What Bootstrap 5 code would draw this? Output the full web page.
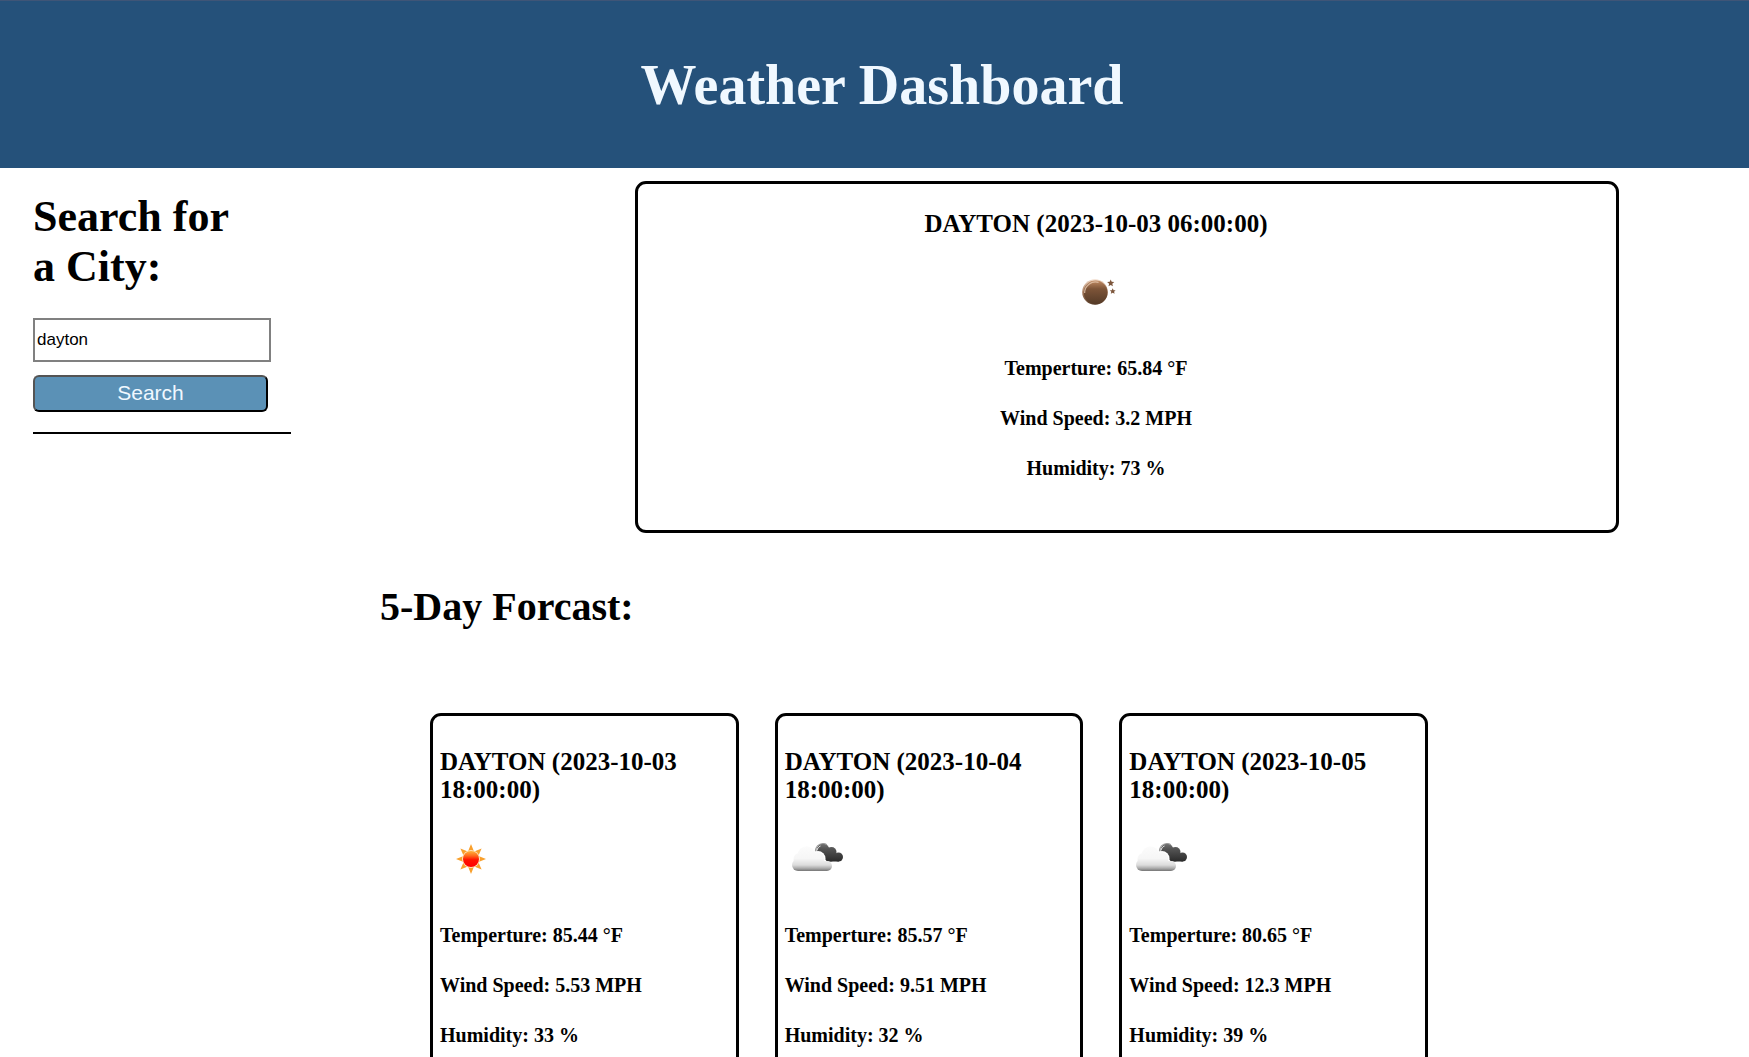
<!DOCTYPE html>
<html lang="en">
<head>
<meta charset="utf-8">
<meta name="viewport" content="width=device-width, initial-scale=1">
<title>Weather Dashboard</title>
<link href="https://cdn.jsdelivr.net/npm/bootstrap@5.3.0/dist/css/bootstrap.min.css" rel="stylesheet">
<style>
  body { font-family: "Liberation Serif", "Times New Roman", serif; color: #000; background: #fff; }
  h1, h2, h3, h4 { font-weight: 700; margin: 0; }
  .site-header { background: #25517a; border-top: 1px solid #3f5577; color: aliceblue; padding: 52px 0 51px 15px; }
  .site-header h1 { font-size: 56px; line-height: 64px; }
  .search-panel { width: 380px; padding: 24px 89px 0 33px; }
  .search-title { font-size: 44px; line-height: 50px; margin-bottom: 26px; }
  .city-input { width: 238px; height: 44px; border: 2px solid #808080; border-radius: 0; padding: 0 2px; font: 17px "Liberation Sans", Arial, sans-serif; color: #000; }
  .search-btn { width: 235px; height: 37px; margin-top: 13px; padding: 0 0 2px; border: 2px outset #000; border-radius: 6px; background: #5b91b6; color: aliceblue; font: 21px "Liberation Sans", Arial, sans-serif; }
  .divider { height: 2px; margin: 20px 0 0; background: #000; border: 0; opacity: 1; }
  .weather-card { border: 3px solid #000; border-radius: 11px; }
  .weather-card h3 { font-size: 25px; line-height: 28px; }
  .weather-card h4 { font-size: 20px; line-height: 23px; }
  .weather-card svg { display: block; width: 62px; height: 62px; margin: 24px 0 34px; }
  .readings { display: flex; flex-direction: column; gap: 27px; }
  .current { margin: 13px 130px 0 255px; padding: 26px 62px 50px 0; }
  .current svg { margin-top: 23px; }
  .forecast-title { font-size: 40px; line-height: 46px; margin: 51px 0 83px; }
  .forecast { gap: 36px; margin: 0 321px 0 50px; }
  .forecast .weather-card { flex: 1 1 0; padding: 32px 7px 52px; }
</style>
<script src="https://cdn.jsdelivr.net/npm/bootstrap@5.3.0/dist/js/bootstrap.bundle.min.js" defer></script>
</head>
<body>
<svg width="0" height="0" class="position-absolute" aria-hidden="true">
  <defs>
    <linearGradient id="sunFill" x1="0" y1="0" x2="0" y2="1"><stop offset="0" stop-color="#ffb43c"/><stop offset=".3" stop-color="#ff6a1c"/><stop offset=".55" stop-color="#ff1200"/><stop offset="1" stop-color="#ff0000"/></linearGradient>
    <linearGradient id="moonFill" x1="0" y1="0" x2="0" y2="1"><stop offset="0" stop-color="#c08a62"/><stop offset=".35" stop-color="#7d5438"/><stop offset="1" stop-color="#543a27"/></linearGradient>
    <linearGradient id="moonRim" x1="0" y1="0" x2="0" y2="1"><stop offset="0" stop-color="#f3dccb"/><stop offset=".5" stop-color="#a5795a"/><stop offset="1" stop-color="#5c402c"/></linearGradient>
    <linearGradient id="cloudFill" gradientUnits="userSpaceOnUse" x1="0" y1="18" x2="0" y2="43"><stop offset="0" stop-color="#fcfcfc"/><stop offset=".5" stop-color="#f6f6f6"/><stop offset=".76" stop-color="#dcdcdc"/><stop offset=".88" stop-color="#b0b0b0"/><stop offset="1" stop-color="#757575"/></linearGradient>
    <linearGradient id="darkFill" gradientUnits="userSpaceOnUse" x1="0" y1="15" x2="0" y2="34"><stop offset="0" stop-color="#777"/><stop offset=".3" stop-color="#555"/><stop offset="1" stop-color="#292929"/></linearGradient>
    <symbol id="icon-sun" viewBox="0 0 62 62">
      <g fill="#f9a02c">
        <path id="ray" d="M31 16 34 23.500h-6z"/>
        <use href="#ray" transform="rotate(45 31 31)"/><use href="#ray" transform="rotate(90 31 31)"/><use href="#ray" transform="rotate(135 31 31)"/><use href="#ray" transform="rotate(180 31 31)"/><use href="#ray" transform="rotate(225 31 31)"/><use href="#ray" transform="rotate(270 31 31)"/><use href="#ray" transform="rotate(315 31 31)"/>
      </g>
      <circle cx="31" cy="31" r="9" fill="#ffe3c0"/>
      <circle cx="31" cy="31" r="8" fill="url(#sunFill)"/>
    </symbol>
    <symbol id="icon-moon" viewBox="0 0 62 62">
      <circle cx="30" cy="31" r="12.8" fill="url(#moonRim)"/>
      <circle cx="30.6" cy="31.4" r="11.8" fill="url(#moonFill)"/>
      <path d="M19.6 32a11 11 0 0 1 14-10.6" fill="none" stroke="#e6c8b0" stroke-width="1.3" opacity=".8"/>
      <path d="M45.700 18.500l1 2.300 2.600.2-2 1.700.6 2.600-2.200-1.400-2.200 1.400.6-2.600-2-1.700 2.600-.2z" fill="#7d563c"/>
      <path d="M47.700 27.200l.9 2 2 .1-1.500 1.400.5 2.100-1.900-1.100-1.900 1.100.5-2.100-1.500-1.400 2-.1z" fill="#7d563c"/>
    </symbol>
    <symbol id="icon-clouds" viewBox="0 0 62 62">
      <g fill="url(#darkFill)">
        <circle cx="38" cy="22" r="6.500"/><circle cx="46.500" cy="24" r="5"/><circle cx="53.500" cy="29" r="4.500"/><circle cx="46" cy="28.500" r="5"/>
        <path d="M34 24h16l4 9.500H42z"/>
      </g>
      <path d="M30 24c.5-5 3.500-8.500 8-8.500 1.500 0 2.800.5 3.800 1.300" fill="none" stroke="#999" stroke-width="1.200"/>
      <path d="M32 22.500c.3-2 1.600-3.800 3.500-4.500" fill="none" stroke="#eee" stroke-width="1"/>
      <g fill="#fff">
        <circle cx="21.500" cy="27" r="9.500"/><circle cx="33" cy="30.500" r="7.500"/>
      </g>
      <g fill="url(#cloudFill)">
        <circle cx="21.500" cy="27" r="8.800"/><circle cx="14.500" cy="31" r="6"/><circle cx="13" cy="37" r="6"/><circle cx="32.500" cy="31" r="6.800"/><circle cx="42" cy="38" r="5"/>
        <path d="M13 30h20l9 4v9H13z"/>
      </g>
    </symbol>
  </defs>
</svg>

<header class="site-header text-center">
  <h1>Weather Dashboard</h1>
</header>

<main class="d-flex align-items-start">
  <aside class="search-panel flex-shrink-0">
    <form onsubmit="return false">
      <h2 class="search-title pe-5"><label for="city">Search for a City:</label></h2>
      <input class="city-input d-block" id="city" type="text" value="dayton">
      <button class="search-btn d-block" type="submit">Search</button>
    </form>
    <hr class="divider">
  </aside>

  <section class="flex-grow-1">
    <article class="weather-card current d-flex flex-column align-items-center text-center">
      <h3>DAYTON (2023-10-03 06:00:00)</h3>
      <svg role="img" aria-label="Clear night"><use href="#icon-moon"/></svg>
      <div class="readings">
        <h4>Temperture: 65.84 °F</h4>
        <h4>Wind Speed: 3.2 MPH</h4>
        <h4>Humidity: 73 %</h4>
      </div>
    </article>

    <h2 class="forecast-title">5-Day Forcast:</h2>

    <div class="forecast d-flex">
      <article class="weather-card">
        <h3>DAYTON (2023-10-03 18:00:00)</h3>
        <svg role="img" aria-label="Sunny"><use href="#icon-sun"/></svg>
        <div class="readings">
          <h4>Temperture: 85.44 °F</h4>
          <h4>Wind Speed: 5.53 MPH</h4>
          <h4>Humidity: 33 %</h4>
        </div>
      </article>
      <article class="weather-card">
        <h3>DAYTON (2023-10-04 18:00:00)</h3>
        <svg role="img" aria-label="Cloudy"><use href="#icon-clouds"/></svg>
        <div class="readings">
          <h4>Temperture: 85.57 °F</h4>
          <h4>Wind Speed: 9.51 MPH</h4>
          <h4>Humidity: 32 %</h4>
        </div>
      </article>
      <article class="weather-card">
        <h3>DAYTON (2023-10-05 18:00:00)</h3>
        <svg role="img" aria-label="Cloudy"><use href="#icon-clouds"/></svg>
        <div class="readings">
          <h4>Temperture: 80.65 °F</h4>
          <h4>Wind Speed: 12.3 MPH</h4>
          <h4>Humidity: 39 %</h4>
        </div>
      </article>
    </div>
  </section>
</main>
</body>
</html>
